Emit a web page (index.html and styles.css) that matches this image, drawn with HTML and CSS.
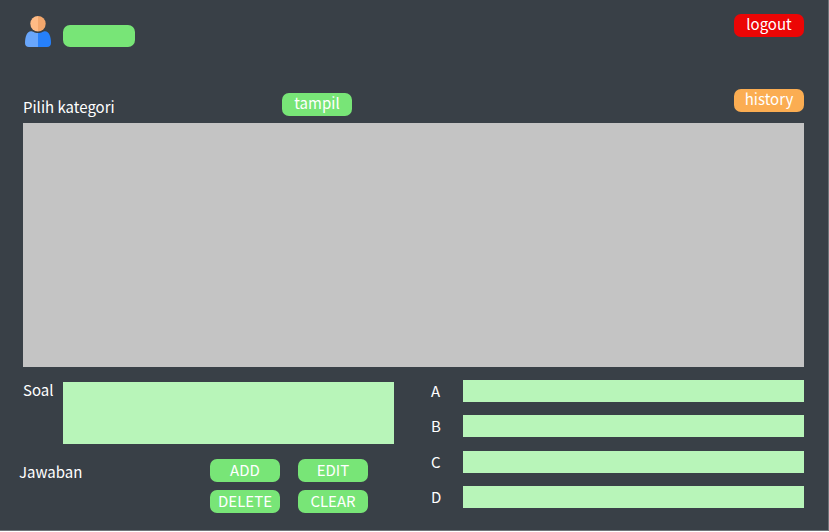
FILE: index.html
```html
<!DOCTYPE html>
<html lang="id">
<head>
<meta charset="utf-8">
<meta name="viewport" content="width=device-width, initial-scale=1">
<title>Soal</title>
<link rel="stylesheet" href="styles.css">
</head>
<body>
<main class="page">
  <header class="header">
    <svg class="avatar" viewBox="0 0 26 31" aria-hidden="true">
      <path fill="#69a6fb" d="M13 31H4C1.500 31 0 29.500 0 27C0 21 2 15.300 6 15.300C8 15.300 9 17 13 17Z"/>
      <path fill="#2680fb" d="M13 31H22C24.500 31 26 29.500 26 27C26 21 24 15.300 20 15.300C18 15.300 17 17 13 17Z"/>
      <path fill="#ffbb85" d="M13 0A7.700 7.700 0 0 0 13 15.400Z"/>
      <path fill="#f3a76c" d="M13 0A7.700 7.700 0 0 1 13 15.400Z"/>
    </svg>
    <input class="user" type="text" aria-label="User">
    <button class="button logout" type="button">logout</button>
  </header>
  <div class="toolbar">
    <span class="category">Pilih kategori</span>
    <button class="button show" type="button">tampil</button>
    <button class="button history" type="button">history</button>
  </div>
  <section class="board"></section>
  <form class="editor">
    <div class="question">
      <label class="question-label" for="soal">Soal</label>
      <textarea class="field" id="soal"></textarea>
    </div>
    <div class="answers">
      <label for="a">A</label><input class="field" id="a" type="text">
      <label for="b">B</label><input class="field" id="b" type="text">
      <label for="c">C</label><input class="field" id="c" type="text">
      <label for="d">D</label><input class="field" id="d" type="text">
    </div>
    <div class="actions">
      <span class="answer-title">Jawaban</span>
      <div class="buttons">
        <button class="button" type="button">ADD</button>
        <button class="button" type="button">EDIT</button>
        <button class="button" type="button">DELETE</button>
        <button class="button" type="button">CLEAR</button>
      </div>
    </div>
  </form>
</main>
</body>
</html>
```
FILE: styles.css
```css
* {
  box-sizing: border-box;
}

body {
  margin: 0;
  background: #fff;
  color: #fff;
  font: 15px/22px "Noto Sans CJK SC", "Noto Sans", sans-serif;
}

.page {
  display: flex;
  flex-direction: column;
  min-height: calc(100vh - 1px);
  padding: 14px 24px 16px 23px;
  background: #394047;
  border-right: 1px solid #70757a;
  border-bottom: 1px solid #70757a;
}

.header {
  display: flex;
  align-items: flex-start;
  height: 75px;
}

.avatar {
  width: 26px;
  height: 31px;
  margin: 2px 12px 0 2px;
}

input,
textarea {
  margin: 0;
  border: 0;
  padding: 0 6px;
  color: #394047;
  font: inherit;
}

.user {
  width: 72px;
  height: 22px;
  margin-top: 11px;
  border-radius: 7px;
  background: #78e577;
}

.button {
  width: 70px;
  height: 23px;
  border: 0;
  border-radius: 7px;
  padding: 0 0 4px;
  background: #78e577;
  color: #fff;
  font: inherit;
  line-height: 18px;
}

.logout {
  margin-left: auto;
  background: #ec0505;
}

.history {
  justify-self: end;
  background: #fbad52;
}

.toolbar {
  display: grid;
  grid-template-columns: 259px 1fr auto;
  height: 34px;
}

.category {
  padding-top: 7px;
}

.show {
  margin-top: 4px;
}

.board {
  flex: 1;
  min-height: 200px;
  background: #c4c4c4;
}

.editor {
  display: grid;
  grid-template-columns: 371fr 373fr;
  grid-template-rows: 64px 55px;
  column-gap: 37px;
  row-gap: 15px;
  margin-top: 13px;
}

.question {
  display: grid;
  grid-template-columns: 40px 1fr;
  padding-top: 2px;
}

.question textarea {
  height: 62px;
  resize: none;
}

.question-label {
  line-height: 16px;
}

.field {
  width: 100%;
  min-width: 0;
  border-radius: 0;
  background: #b8f5b9;
}

.answers {
  display: grid;
  grid-row: span 2;
  grid-template-columns: 32px 1fr;
  grid-auto-rows: 22px;
  align-content: space-between;
  height: 128px;
}

.actions {
  display: grid;
  grid-template-columns: 191px 1fr;
  margin-left: -4px;
}

.answer-title {
  padding-top: 2px;
}

.buttons {
  display: grid;
  grid-template-columns: 70px 70px;
  grid-auto-rows: 23px;
  gap: 8px 18px;
}

.buttons .button {
  padding-bottom: 2px;
}
```
